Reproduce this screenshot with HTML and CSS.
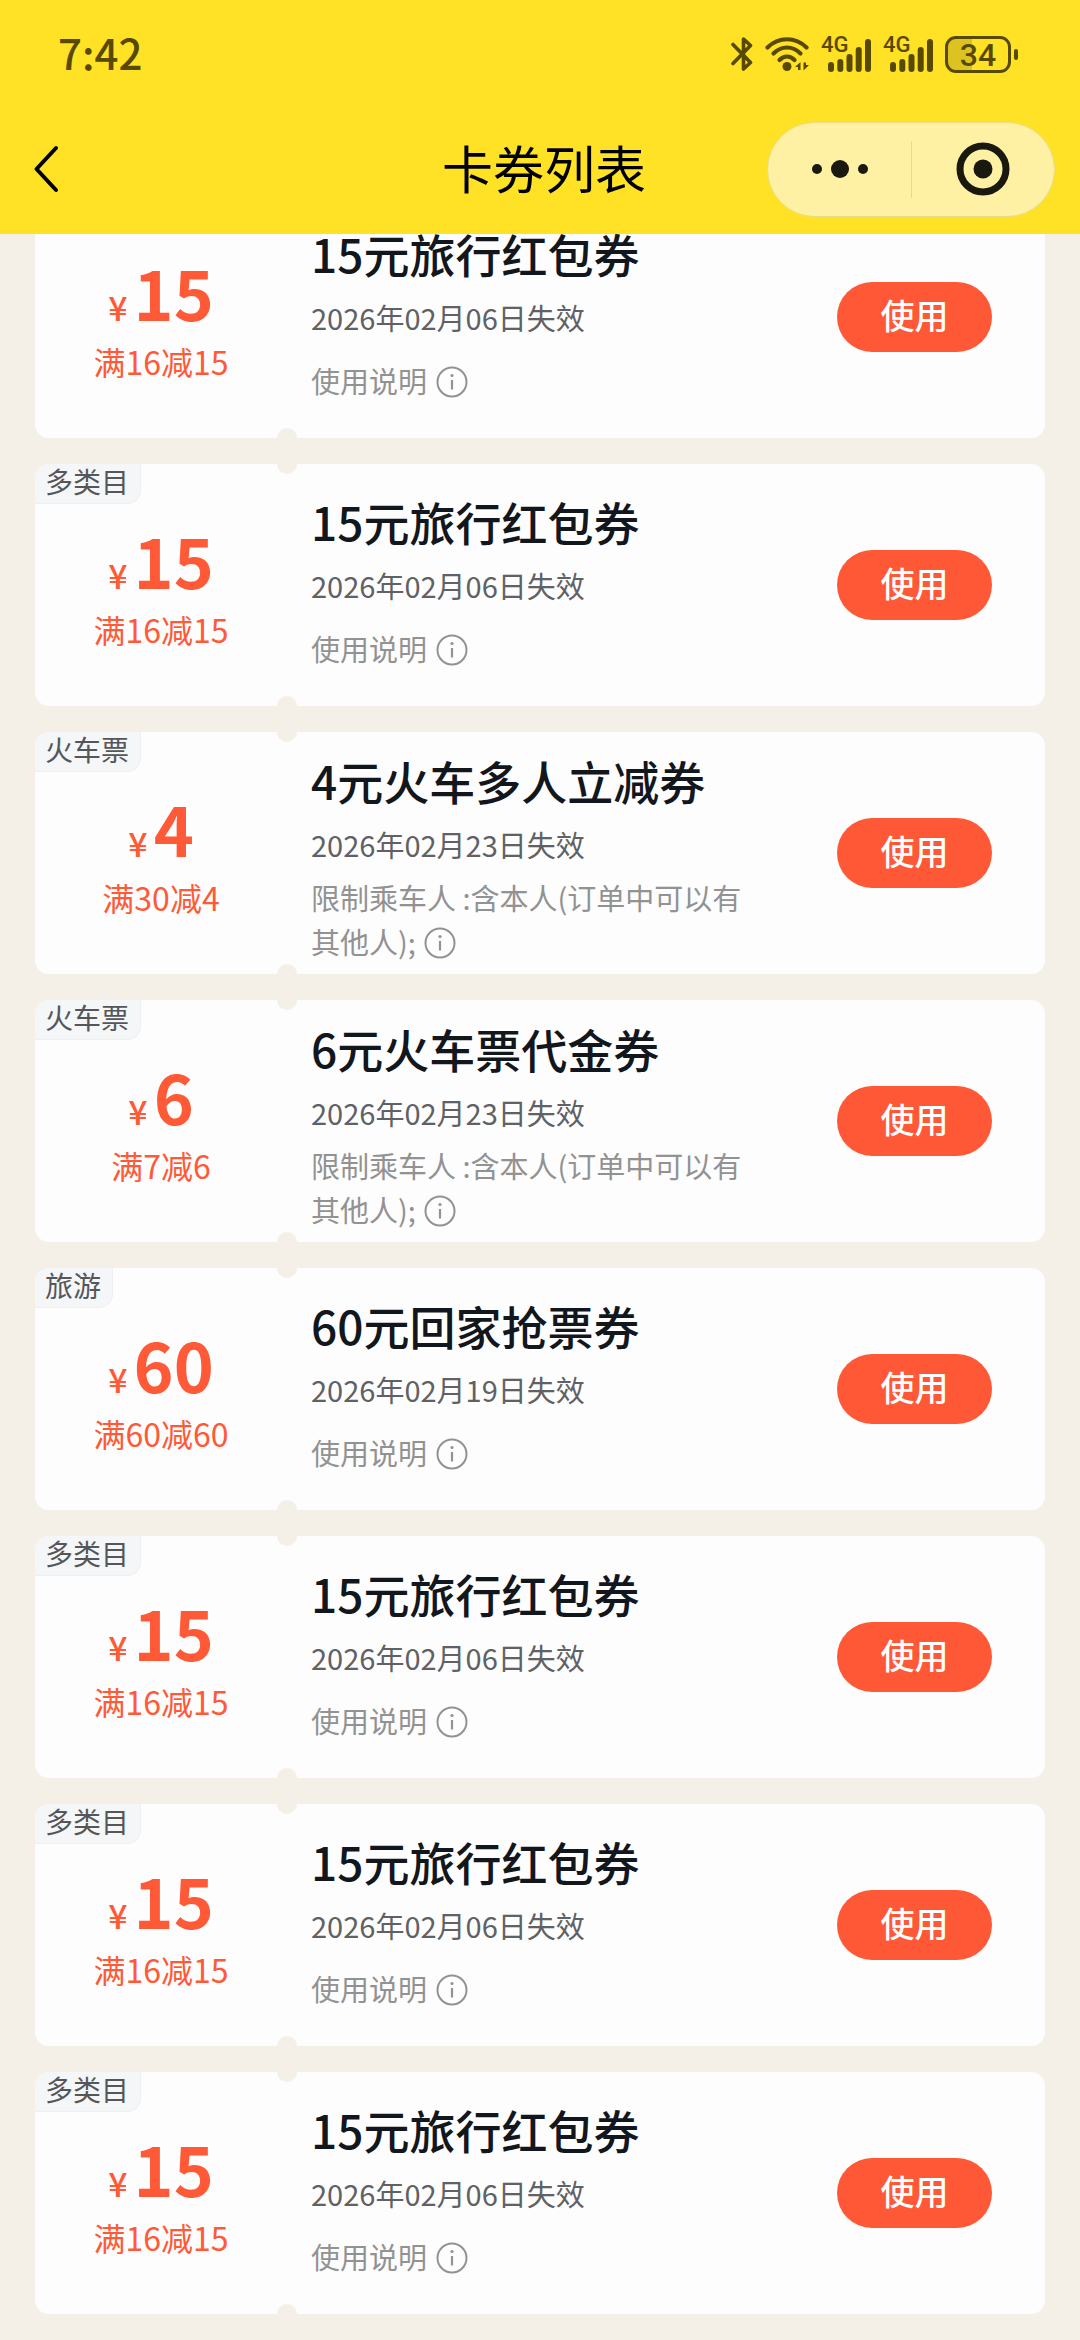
FILE: index.html
```html
<!DOCTYPE html>
<html lang="zh-CN">
<head>
<meta charset="utf-8">
<meta name="viewport" content="width=device-width, initial-scale=1">
<title>卡券列表</title>
<link rel="stylesheet" href="styles.css">
</head>
<body>
<svg class="defs" aria-hidden="true">
  <symbol id="info" viewBox="0 0 32 32">
    <circle cx="16" cy="16" r="14.5" fill="none" stroke="currentColor" stroke-width="2"/>
    <circle cx="16" cy="9.5" r="1.6" fill="currentColor"/>
    <path d="M16 14v9.5" fill="none" stroke="currentColor" stroke-width="2.2"/>
  </symbol>
  <symbol id="signal" viewBox="0 0 50 36">
    <path d="M10 28v4M19.300 25v7M28.500 20v12M37.700 13v19M47 5v27" transform="translate(0 1)" fill="none" stroke="currentColor" stroke-width="6" stroke-linecap="round"/>
  </symbol>
</svg>

<header class="top">
  <div class="status">
    <span class="clock">7:42</span>
    <div class="status-icons">
      <svg width="22" height="36" viewBox="0 0 22 36" aria-label="蓝牙"><path d="M2 8.500L19.500 26.500L12.500 33V3L19.500 9.500L2 27.500" fill="none" stroke="currentColor" stroke-width="3.600" stroke-linecap="round" stroke-linejoin="round"/></svg>
      <svg width="44" height="36" viewBox="0 0 44 36" aria-label="无线网络"><g fill="none" stroke="currentColor" stroke-width="4.200" stroke-linecap="round"><path d="M2.500 11.500C13.500 .500 30.500 .500 41.500 11.500"/><path d="M8.500 17.500C16.500 9.500 27.500 9.500 35.500 17.500"/><path d="M14.500 24C19 19.500 25 19.500 29.500 24"/></g><circle cx="22" cy="30.500" r="4.500" fill="currentColor"/><path d="M30 31l5.500-5v8h-2.500v-3zM44 29l-5.500 5.500v-8h2.500v2.500z" fill="currentColor"/></svg>
      <div class="signal"><svg width="50" height="36" aria-hidden="true"><use href="#signal"/></svg><span>4G</span></div>
      <div class="signal"><svg width="50" height="36" aria-hidden="true"><use href="#signal"/></svg><span>4G</span></div>
      <div class="battery"><span>34</span></div>
    </div>
  </div>
  <nav class="bar">
    <button class="back" aria-label="返回"><svg width="28" height="50" viewBox="0 0 28 50"><path d="M23 4L3.500 25L23 46" fill="none" stroke="currentColor" stroke-width="4" stroke-linecap="round" stroke-linejoin="round"/></svg></button>
    <h1>卡券列表</h1>
    <div class="capsule">
      <button aria-label="更多"><svg width="58" height="20" viewBox="0 0 58 20" fill="currentColor"><circle cx="6" cy="10" r="5"/><circle cx="29" cy="10" r="9"/><circle cx="52" cy="10" r="5"/></svg></button>
      <button aria-label="关闭"><svg width="54" height="54" viewBox="0 0 54 54"><circle cx="27" cy="27" r="23" fill="none" stroke="currentColor" stroke-width="7"/><circle cx="27" cy="27" r="9.500" fill="currentColor"/></svg></button>
    </div>
  </nav>
</header>

<main class="list">
  <article class="card">
    <div class="value"><p class="price"><span>¥</span><b>15</b></p><p class="rule">满16减15</p></div>
    <div class="detail"><h2>15元旅行红包券</h2><p class="date">2026年02月06日失效</p><p class="note">使用说明 <svg class="info"><use href="#info"/></svg></p></div>
    <button class="use">使用</button>
  </article>
  <article class="card">
    <span class="tag">多类目</span>
    <div class="value"><p class="price"><span>¥</span><b>15</b></p><p class="rule">满16减15</p></div>
    <div class="detail"><h2>15元旅行红包券</h2><p class="date">2026年02月06日失效</p><p class="note">使用说明 <svg class="info"><use href="#info"/></svg></p></div>
    <button class="use">使用</button>
  </article>
  <article class="card">
    <span class="tag">火车票</span>
    <div class="value"><p class="price"><span>¥</span><b>4</b></p><p class="rule">满30减4</p></div>
    <div class="detail long"><h2>4元火车多人立减券</h2><p class="date">2026年02月23日失效</p><p class="note">限制乘车人 :含本人(订单中可以有其他人); <svg class="info"><use href="#info"/></svg></p></div>
    <button class="use">使用</button>
  </article>
  <article class="card">
    <span class="tag">火车票</span>
    <div class="value"><p class="price"><span>¥</span><b>6</b></p><p class="rule">满7减6</p></div>
    <div class="detail long"><h2>6元火车票代金券</h2><p class="date">2026年02月23日失效</p><p class="note">限制乘车人 :含本人(订单中可以有其他人); <svg class="info"><use href="#info"/></svg></p></div>
    <button class="use">使用</button>
  </article>
  <article class="card">
    <span class="tag">旅游</span>
    <div class="value"><p class="price"><span>¥</span><b>60</b></p><p class="rule">满60减60</p></div>
    <div class="detail"><h2>60元回家抢票券</h2><p class="date">2026年02月19日失效</p><p class="note">使用说明 <svg class="info"><use href="#info"/></svg></p></div>
    <button class="use">使用</button>
  </article>
  <article class="card">
    <span class="tag">多类目</span>
    <div class="value"><p class="price"><span>¥</span><b>15</b></p><p class="rule">满16减15</p></div>
    <div class="detail"><h2>15元旅行红包券</h2><p class="date">2026年02月06日失效</p><p class="note">使用说明 <svg class="info"><use href="#info"/></svg></p></div>
    <button class="use">使用</button>
  </article>
  <article class="card">
    <span class="tag">多类目</span>
    <div class="value"><p class="price"><span>¥</span><b>15</b></p><p class="rule">满16减15</p></div>
    <div class="detail"><h2>15元旅行红包券</h2><p class="date">2026年02月06日失效</p><p class="note">使用说明 <svg class="info"><use href="#info"/></svg></p></div>
    <button class="use">使用</button>
  </article>
  <article class="card">
    <span class="tag">多类目</span>
    <div class="value"><p class="price"><span>¥</span><b>15</b></p><p class="rule">满16减15</p></div>
    <div class="detail"><h2>15元旅行红包券</h2><p class="date">2026年02月06日失效</p><p class="note">使用说明 <svg class="info"><use href="#info"/></svg></p></div>
    <button class="use">使用</button>
  </article>
</main>
</body>
</html>
```

FILE: styles.css
```css
* {
  box-sizing: border-box;
}

body,
h1,
h2,
p {
  margin: 0;
}

body {
  background: #f4efe7;
  font-family: "Noto Sans CJK SC", sans-serif;
}

button {
  padding: 0;
  border: 0;
  background: none;
  color: inherit;
  font-family: inherit;
}

svg {
  display: block;
}

.defs {
  display: none;
}

/* Status bar and title bar */
.top {
  position: sticky;
  top: 0;
  z-index: 2;
  padding-bottom: 4px;
  background: #ffe126;
}

.status {
  display: flex;
  justify-content: space-between;
  align-items: center;
  height: 108px;
  padding: 0 62px 0 58px;
  color: #574900;
}

.clock {
  padding-bottom: 4px;
  font-size: 42px;
  font-weight: 500;
  line-height: 60px;
}

.status-icons {
  display: flex;
  align-items: center;
  gap: 12px;
}

.signal {
  position: relative;
}

.signal span {
  position: absolute;
  top: 0;
  left: 0;
  font-family: "Roboto", sans-serif;
  font-size: 22px;
  font-weight: 500;
  line-height: 18px;
}

.battery {
  position: relative;
  width: 66px;
  height: 37px;
  margin-right: 7px;
  border: 3px solid currentColor;
  border-radius: 11px;
  background: linear-gradient(90deg, #dcc322 24px, transparent 24px);
  font-family: "Roboto", sans-serif;
  font-size: 32px;
  font-weight: 500;
  line-height: 32px;
  text-align: center;
}

.battery::after {
  content: "";
  position: absolute;
  top: 10px;
  right: -10px;
  width: 4px;
  height: 11px;
  border-radius: 2px;
  background: currentColor;
}

.bar {
  display: grid;
  grid-template-columns: 1fr auto 1fr;
  align-items: center;
  height: 122px;
  padding: 0 25px 0 33px;
}

.back {
  justify-self: start;
}

h1 {
  padding-bottom: 4px;
  font-size: 51px;
  font-weight: 400;
  line-height: 72px;
}

.capsule {
  display: grid;
  grid-template-columns: 1fr 1fr;
  justify-self: end;
  width: 288px;
  height: 95px;
  border: 1px solid #e9dc86;
  border-radius: 48px;
  background: #fff1a4;
  color: #1a1910;
}

.capsule button {
  display: flex;
  align-items: center;
  justify-content: center;
}

.capsule button + button {
  background: linear-gradient(#e6d994, #e6d994) left center / 1px 57px no-repeat;
}

/* Coupons */
.list {
  display: flex;
  flex-direction: column;
  gap: 26px;
  margin-top: -38px;
  padding: 0 35px 26px;
}

.card {
  position: relative;
  display: grid;
  grid-template-columns: 252px 1fr auto;
  align-items: center;
  min-height: 242px;
  padding-right: 53px;
  border-radius: 14px;
  background: #fdfdfd;
}

/* Ticket notches between the value and the details */
.card::before,
.card::after {
  content: "";
  position: absolute;
  left: 242px;
  width: 20px;
  height: 20px;
  border-radius: 50%;
  background: #f4efe7;
}

.card::before {
  top: -10px;
}

.card::after {
  bottom: -10px;
}

.tag {
  position: absolute;
  top: 0;
  left: 0;
  height: 40px;
  padding: 0 11px 0 10px;
  border: solid #edf0f3;
  border-width: 0 1px 1px 0;
  border-radius: 14px 0;
  background: #f4f6f8;
  color: #55565a;
  font-size: 28px;
  line-height: 34px;
}

.value {
  color: #ff5a37;
  text-align: center;
}

.price {
  display: flex;
  justify-content: center;
  align-items: baseline;
  gap: 6px;
  line-height: 72px;
}

.price span {
  font-size: 34px;
  font-weight: 500;
}

.price b {
  font-size: 68px;
  font-weight: 700;
}

.rule {
  font-size: 32px;
  line-height: 36px;
}

.detail {
  padding: 0 0 2px 24px;
}

.detail.long {
  padding-top: 6px;
}

h2 {
  color: #12161d;
  font-size: 46px;
  font-weight: 500;
  line-height: 66px;
}

.date {
  color: #606164;
  font-size: 29px;
  line-height: 62px;
}

.note {
  max-width: 440px;
  padding: 10px 0;
  color: #929292;
  font-size: 29px;
  line-height: 44px;
}

.long .note {
  padding: 0;
}

.info {
  display: inline-block;
  width: 32px;
  height: 32px;
  margin-left: 2px;
  vertical-align: -5px;
}

.use {
  width: 155px;
  height: 70px;
  padding-bottom: 6px;
  border-radius: 35px;
  background: #ff5836;
  color: #fff;
  font-size: 34px;
  font-weight: 500;
}
```
